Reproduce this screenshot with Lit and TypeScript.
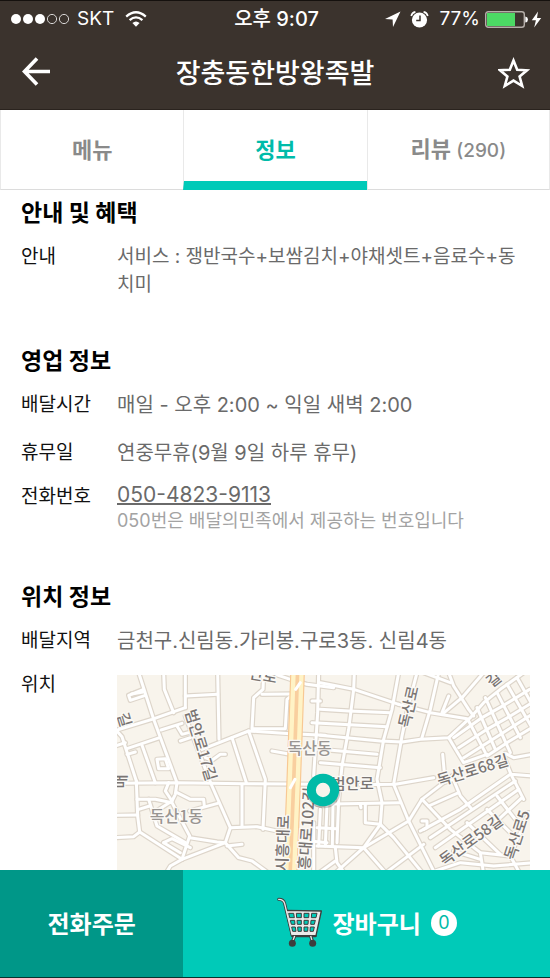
import { LitElement, html, css, svg } from "lit";
import { customElement, state, property } from "lit/decorators.js";
import { classMap } from "lit/directives/class-map.js";

type Road = string;

const WEST_ROADS: Road[] = [
  "85,20 130,160 200,350", "160,20 162,70 190,140", "225,20 225,125", "322,20 326,220",
  "225,90 322,85", "20,192 125,160 225,125", "100,70 55,88 60,103 105,88", "64,84 98,78",
  "15,190 35,212 78,345", "50,248 148,215", "95,238 135,350", "50,265 75,258", "15,240 45,230",
  "15,352 200,350 400,353 640,355", "152,192 215,172", "200,180 215,205 235,200", "210,225 240,215",
  "140,280 165,278 175,308 145,308 140,280",
  "78,345 82,450 88,498 215,580 345,530 360,485 305,360 270,270 225,150",
  "15,448 82,447", "15,515 70,512 88,498", "80,400 135,400 185,410 238,510 215,580",
  "200,350 195,385 185,405 130,440", "175,350 165,375 185,405", "200,380 240,400 280,400 282,420", "238,435 322,412",
  "115,400 140,480 225,530", "160,530 185,518 240,545", "160,530 210,560", "238,515 320,528 345,530",
  "165,625 180,600 215,580", "345,530 385,575 425,585 480,625", "350,540 395,535",
  "360,485 440,482 500,495 530,495", "395,355 395,480", "275,250 415,195 465,340 458,490",
  "365,215 408,350", "415,195 540,203 645,208", "460,20 458,70 430,95 425,188 525,188 530,100 540,92",
  "455,85 540,84", "485,255 540,265", "285,275 305,283 330,265 345,265", "480,20 540,40 590,55 670,65",
  "85,430 118,420", "550,520 650,530", "610,470 610,620",
];

const EAST_ROADS: Road[] = [
  "0,50 100,70 130,80 235,115", "102,20 100,70 85,190 65,300 55,400 50,530", "0,130 85,135 210,140",
  "-25,170 200,182", "0,208 180,225 245,228 300,220 385,215 450,155 490,110 540,70 610,20",
  "0,250 170,265", "0,290 180,305", "-5,20 -8,140 -20,330", "-25,105 0,105",
  "235,20 215,130 190,220 170,340 185,410 180,475 130,545 40,625", "120,356 225,355 340,335",
  "290,20 265,115 245,210 220,355 265,465 345,625", "235,115 330,140 440,158",
  "355,20 330,130 305,215", "310,20 390,50", "365,140 385,90", "385,20 400,60 445,130 460,150",
  "365,145 425,95 490,20", "385,215 430,290 500,265", "400,215 480,158 550,118 628,70",
  "415,245 500,190 570,150 635,110", "430,275 520,218 635,145", "500,270 560,230 635,185",
  "445,165 495,260", "470,125 525,250", "495,95 570,260", "530,80 600,215", "560,55 632,180", "590,35 635,115",
  "555,262 580,275 635,265", "550,270 572,325 635,330", "570,325 420,430 310,490",
  "367,265 372,320", "395,330 420,390 455,430", "265,465 305,400 370,350 400,340",
  "305,400 390,490 480,560 570,570 625,440", "325,420 415,380", "330,515 585,345", "345,545 595,370",
  "470,520 605,395", "572,325 610,400", "500,430 570,500", "530,390 585,460", "440,470 540,565",
  "-10,415 160,412 240,410", "135,415 135,470 180,475", "120,415 122,425", "-10,485 50,488", "-10,540 130,545 265,465",
  "20,415 15,540", "38,415 36,540", "0,430 -5,540", "45,545 50,590 75,625", "130,545 200,625",
  "-10,625 45,585", "190,625 310,535", "180,475 220,515 310,625", "300,495 320,485 320,465 305,465",
  "345,615 420,590 520,600 640,590", "400,555 480,580", "480,560 490,625", "570,570 600,625",
];

interface Label { t: string; x: number; y: number; r: number; area?: boolean }

const LABELS: Label[] = [
  { t: "독산동", x: 598, y: 264, r: 0, area: true },
  { t: "독산1동", x: 198, y: 467, r: 0, area: true },
  { t: "범안로", x: 727, y: 368, r: 0 },
  { t: "범안로17길", x: 256, y: 242, r: 73 },
  { t: "길", x: 26, y: 166, r: 73 },
  { t: "매", x: 48, y: 346, r: -90 },
  { t: "시흥대로", x: 534, y: 532, r: -88 },
  { t: "흥대로102길", x: 606, y: 488, r: -86 },
  { t: "독산로", x: 911, y: 126, r: -77 },
  { t: "독산로68길", x: 1092, y: 328, r: -17 },
  { t: "독산로58길", x: 1092, y: 536, r: -36 },
  { t: "독산로5", x: 1236, y: 512, r: -72 },
  { t: "산로", x: 456, y: 44, r: 10 },
  { t: "길", x: 1160, y: 54, r: -38 },
];

@customElement("street-map")
class StreetMap extends LitElement {
  static styles = css`
    :host { display: block; height: 240px; background: #f8f4ec; overflow: hidden; }
    .map { display: block; width: 100%; height: 100%; }
    .road { fill: none; stroke-linejoin: round; stroke-linecap: round; }
    .edge { stroke: #ddd5ca; stroke-width: 16; }
    .fill { stroke: #fff; stroke-width: 9; }
    .avenue-edge { stroke: #f8c893; stroke-width: 44; }
    .avenue-fill { stroke: #fff3c6; stroke-width: 37; }
    .avenue-mid { stroke: #f9cf9f; stroke-width: 11; }
    .label {
      font: 500 46px "Noto Sans CJK KR", sans-serif;
      fill: #7a7573; text-anchor: middle;
      stroke: #fbf9f5; stroke-width: 8; paint-order: stroke; stroke-linejoin: round;
    }
    .area { fill: #999592; font-size: 48px; }
    .shadow { fill: none; stroke: #00000030; stroke-width: 30; }
    .pin { fill: #f8f4ec; stroke: #00baa7; stroke-width: 27; }
  `;

  private roads(kind: string) {
    const cls = `road ${kind}`;
    return svg`
      <g>${WEST_ROADS.map((p) => svg`<polyline class=${cls} points=${p}></polyline>`)}</g>
      <g transform="translate(630 0)">${EAST_ROADS.map((p) => svg`<polyline class=${cls} points=${p}></polyline>`)}</g>`;
  }

  render() {
    return html`
      <svg class="map" viewBox="20 27 1240 720" preserveAspectRatio="xMinYMin slice" role="img" aria-label="위치 지도">
        ${this.roads("edge")}
        ${this.roads("fill")}
        <path class="road avenue-edge" d="M562 10 L550 350 L534 760" />
        <path class="road avenue-fill" d="M562 10 L550 350 L534 760" />
        <path class="road avenue-mid" d="M562 10 L550 350 L534 760" />
        <path class="road fill" d="M556 70 L570 50 M540 365 L554 340" />
        ${LABELS.map((l) => svg`
          <text class=${l.area ? "label area" : "label"} x=${l.x} y=${l.y}
            transform=${`rotate(${l.r} ${l.x} ${l.y})`}>${l.t}</text>`)}
        <circle class="shadow" cx="640" cy="377" r="35" />
        <circle class="pin" cx="638" cy="372" r="35" />
      </svg>`;
  }
}

@customElement("status-bar")
class StatusBar extends LitElement {
  static styles = css`
    :host {
      display: grid; grid-template-columns: 1fr auto 1fr; align-items: center;
      height: 36px; padding: 0 8px 0 11px; color: #fff;
      font: 400 19px/24px Inter, "Noto Sans CJK KR", sans-serif;
    }
    .side { display: flex; align-items: center; }
    .end { justify-content: flex-end; }
    .carrier { margin: 0 11px 0 7px; }
    .time { font-weight: 500; font-size: 20px; }
    .alarm { margin: 0 10px 0 9px; }
    .battery { margin: 0 3px 0 5px; }
    svg { display: block; flex: none; }
  `;

  render() {
    return html`
      <div class="side">
        <svg width="59" height="12" viewBox="0 0 59 12" aria-hidden="true">
          <g fill="#fff"><circle cx="5" cy="6" r="5" /><circle cx="17" cy="6" r="5" /><circle cx="29" cy="6" r="5" /></g>
          <g fill="none" stroke="#d8d6d5"><circle cx="41" cy="6" r="4.6" /><circle cx="53" cy="6" r="4.6" /></g>
        </svg>
        <span class="carrier">SKT</span>
        <svg width="22" height="16" viewBox="0 0 22 16" aria-hidden="true">
          <g fill="none" stroke="#fff" stroke-width="2.3">
            <path d="M1.2 5.6 Q11 -3 20.8 5.6" /><path d="M4.6 9.2 Q11 3.6 17.4 9.2" />
          </g>
          <path d="M7.4 12 Q11 8.9 14.6 12 L11 15.8Z" fill="#fff" />
        </svg>
      </div>
      <span class="time">오후 9:07</span>
      <div class="side end">
        <svg width="16" height="16" viewBox="0 0 16 16" aria-hidden="true"><path d="M15.5 .5 L0 8 L7.6 8.4 L8 16Z" fill="#fff" /></svg>
        <svg class="alarm" width="19" height="17" viewBox="0 0 19 17" aria-hidden="true">
          <circle cx="9.5" cy="9" r="7.6" fill="#fff" />
          <path d="M1.2 5 Q2 1.6 5.4 .9 M17.8 5 Q17 1.6 13.6 .9" fill="none" stroke="#fff" stroke-width="1.6" />
          <path d="M10 4.4 V9.4 H6.2" fill="none" stroke="#3b332d" stroke-width="1.5" />
        </svg>
        <span>77%</span>
        <svg class="battery" width="43" height="17" viewBox="0 0 43 17" aria-hidden="true">
          <rect x=".7" y=".7" width="38.6" height="15.6" rx="2.5" fill="none" stroke="#b5aea9" stroke-width="1.4" />
          <rect x="2" y="2" width="28" height="13" fill="#4cd964" />
          <path d="M40.3 5.4 Q43 6 43 8.5 Q43 11 40.3 11.6Z" fill="#fff" />
        </svg>
        <svg width="11" height="17" viewBox="0 0 11 17" aria-hidden="true"><path d="M7 .5 L.8 9.3 H4.9 L3.2 16.5 L10.2 6.9 H6Z" fill="#fff" /></svg>
      </div>`;
  }
}

@customElement("info-row")
class InfoRow extends LitElement {
  @property() label = "";
  static styles = css`
    :host { display: grid; grid-template-columns: 96px 1fr; margin-top: 16px; font-size: 20px; }
    .label { color: #111; font-size: 19px; line-height: 28px; }
    .value { color: #6a6a6a; line-height: 28px; min-width: 0; word-break: break-all; }
  `;
  render() {
    return html`<div class="label" id="l">${this.label}</div>
      <div class="value" role="group" aria-labelledby="l"><slot></slot></div>`;
  }
}

@customElement("app-root")
class AppRoot extends LitElement {
  @state() private tab = 1;

  static styles = css`
    * { box-sizing: border-box; }
    :host {
      box-sizing: border-box;
      display: flex; flex-direction: column; height: 100vh; background: #fff;
      font-family: Inter, "Noto Sans CJK KR", sans-serif; color: #000;
      border-bottom: 1px solid #08332f;
    }
    button { border: 0; padding: 0; margin: 0; background: none; font: inherit; color: inherit; cursor: pointer; }
    .top { flex: none; background: #3b332d; border-top: 1px solid #15110e; border-bottom: 1px solid #2a231e; color: #fff; }
    .bar { display: flex; align-items: center; justify-content: space-between; height: 72px; padding: 0 20px; }
    .title { margin: 0; padding-top: 2px; font-size: 27px; line-height: 40px; font-weight: 500; }
    .icon { display: block; }
    .tabs { flex: none; display: grid; grid-template-columns: repeat(3, 1fr); height: 80px; }
    .tab {
      border-left: 1px solid #e9e9e9; border-bottom: 1px solid #dcdcdc;
      color: #8a8a8a; font-size: 22px; line-height: 32px; font-weight: 700;
    }
    .tab:last-child { border-right: 1px solid #e9e9e9; }
    .tab.on { color: #00bba9; border-bottom: 9px solid #00cab8; padding-top: 8px; }
    .count { font-size: 19px; font-weight: 500; }
    .content { flex: 1; min-height: 0; overflow: hidden auto; scrollbar-width: none; padding: 9px 20px 24px 21px; }
    .section { margin-bottom: 48px; }
    .heading { margin: 0; font-size: 23px; line-height: 28px; font-weight: 700; }
    .dense { font-size: 19px; }
    .spaced { margin-top: 20px; }
    .phone { display: block; width: fit-content; color: inherit; font-size: 21px; line-height: 24px; text-decoration: underline; text-underline-offset: 1px; }
    .note { margin: 0; color: #a3a3a3; font-size: 18px; line-height: 28px; }
    .map { margin-top: 4px; }
    .actions { flex: none; display: grid; grid-template-columns: 1fr 2fr; height: 107px; color: #fff; font-size: 24px; font-weight: 700; }
    .call { background: #009788; padding-bottom: 2px; }
    .cart { display: flex; align-items: center; justify-content: center; gap: 10px; background: #00cab8; padding-bottom: 2px; }
    .badge {
      width: 26px; height: 26px; border-radius: 50%; background: #fff; color: #00bba9;
      font-size: 18px; line-height: 26px; font-weight: 400; text-align: center;
    }
  `;

  private tabButton(i: number, name: string, count?: number) {
    return html`<button role="tab" aria-selected=${this.tab === i} class=${classMap({ tab: true, on: this.tab === i })}
      @click=${() => (this.tab = i)}>${name}${count ? html` <span class="count">(${count})</span>` : ""}</button>`;
  }

  render() {
    return html`
      <header class="top">
        <status-bar></status-bar>
        <div class="bar">
          <button aria-label="뒤로">
            <svg class="icon" width="32" height="32" viewBox="0 0 32 32">
              <path d="M30 14.5 H5 M17 1.5 L4.5 14.5 L17 27.5" fill="none" stroke="#fff" stroke-width="3.6" />
            </svg>
          </button>
          <h1 class="title">장충동한방왕족발</h1>
          <button aria-label="찜하기">
            <svg class="icon" width="32" height="32" viewBox="0 0 32 32">
              <path d="M15.5 3.5 L19.2 12.8 L29 13.3 L21.6 19.5 L24.2 29 L15.5 23.6 L6.8 29 L9.4 19.5 L2 13.3 L11.8 12.8Z"
                fill="none" stroke="#fff" stroke-width="2.6" />
            </svg>
          </button>
        </div>
      </header>
      <nav class="tabs" role="tablist">
        ${this.tabButton(0, "메뉴")}${this.tabButton(1, "정보")}${this.tabButton(2, "리뷰", 290)}
      </nav>
      <main class="content">
        <section class="section">
          <h2 class="heading">안내 및 혜택</h2>
          <info-row class="dense" label="안내">서비스 : 쟁반국수+보쌈김치+야채셋트+음료수+동치미</info-row>
        </section>
        <section class="section">
          <h2 class="heading">영업 정보</h2>
          <info-row label="배달시간">매일 - 오후 2:00 ~ 익일 새벽 2:00</info-row>
          <info-row class="spaced" label="휴무일">연중무휴(9월 9일 하루 휴무)</info-row>
          <info-row label="전화번호">
            <a class="phone" href="tel:050-4823-9113">050-4823-9113</a>
            <p class="note">050번은 배달의민족에서 제공하는 번호입니다</p>
          </info-row>
        </section>
        <section>
          <h2 class="heading">위치 정보</h2>
          <info-row label="배달지역">금천구.신림동.가리봉.구로3동. 신림4동</info-row>
          <info-row label="위치"><street-map class="map"></street-map></info-row>
        </section>
      </main>
      <footer class="actions">
        <button class="call">전화주문</button>
        <button class="cart">
          <svg class="icon" width="46" height="51" viewBox="48 92 138 153" aria-hidden="true">
            <path d="M53 99 Q68 99 71 112 L94 208 H163" fill="none" stroke="#3d3d3d" stroke-width="9" stroke-linecap="round" stroke-linejoin="round" />
            <path d="M75 132 L181 134 L165 208 H92Z" fill="#eceaea" stroke="#3d3d3d" stroke-width="4" stroke-linejoin="round" />
            <path d="M53 99 Q68 99 71 112 L93 205" fill="none" stroke="#eceaea" stroke-width="4" stroke-linecap="round" />
            <g fill="#00cab8" stroke="#3d3d3d" stroke-width="3">
              <path d="M83 141 h15 l2 13 h-14z M106 141 h15 v13 h-14z M129 141 h15 l-1 13 h-14z M152 141 h16 l-3 13 h-14z" />
              <path d="M88 162 h13 l1 12 h-11z M108 162 h13 v12 h-12z M129 162 h13 l-1 12 h-12z M150 162 h13 l-3 12 h-11z" />
              <path d="M92 182 h11 l2 13 h-10z M110 182 h11 v13 h-10z M129 182 h12 l-1 13 h-11z M148 182 h12 l-3 13 h-10z" />
            </g>
            <path d="M101 209 L94 227 M149 209 L155 227" stroke="#3d3d3d" stroke-width="10" />
            <path d="M101 209 L95 225 M149 209 L154 225" stroke="#eceaea" stroke-width="4" />
            <circle cx="94" cy="231" r="10.5" fill="#3d3d3d" /><circle cx="155" cy="231" r="10.5" fill="#3d3d3d" />
          </svg>
          <span>장바구니</span>
          <span class="badge">0</span>
        </button>
      </footer>`;
  }
}
